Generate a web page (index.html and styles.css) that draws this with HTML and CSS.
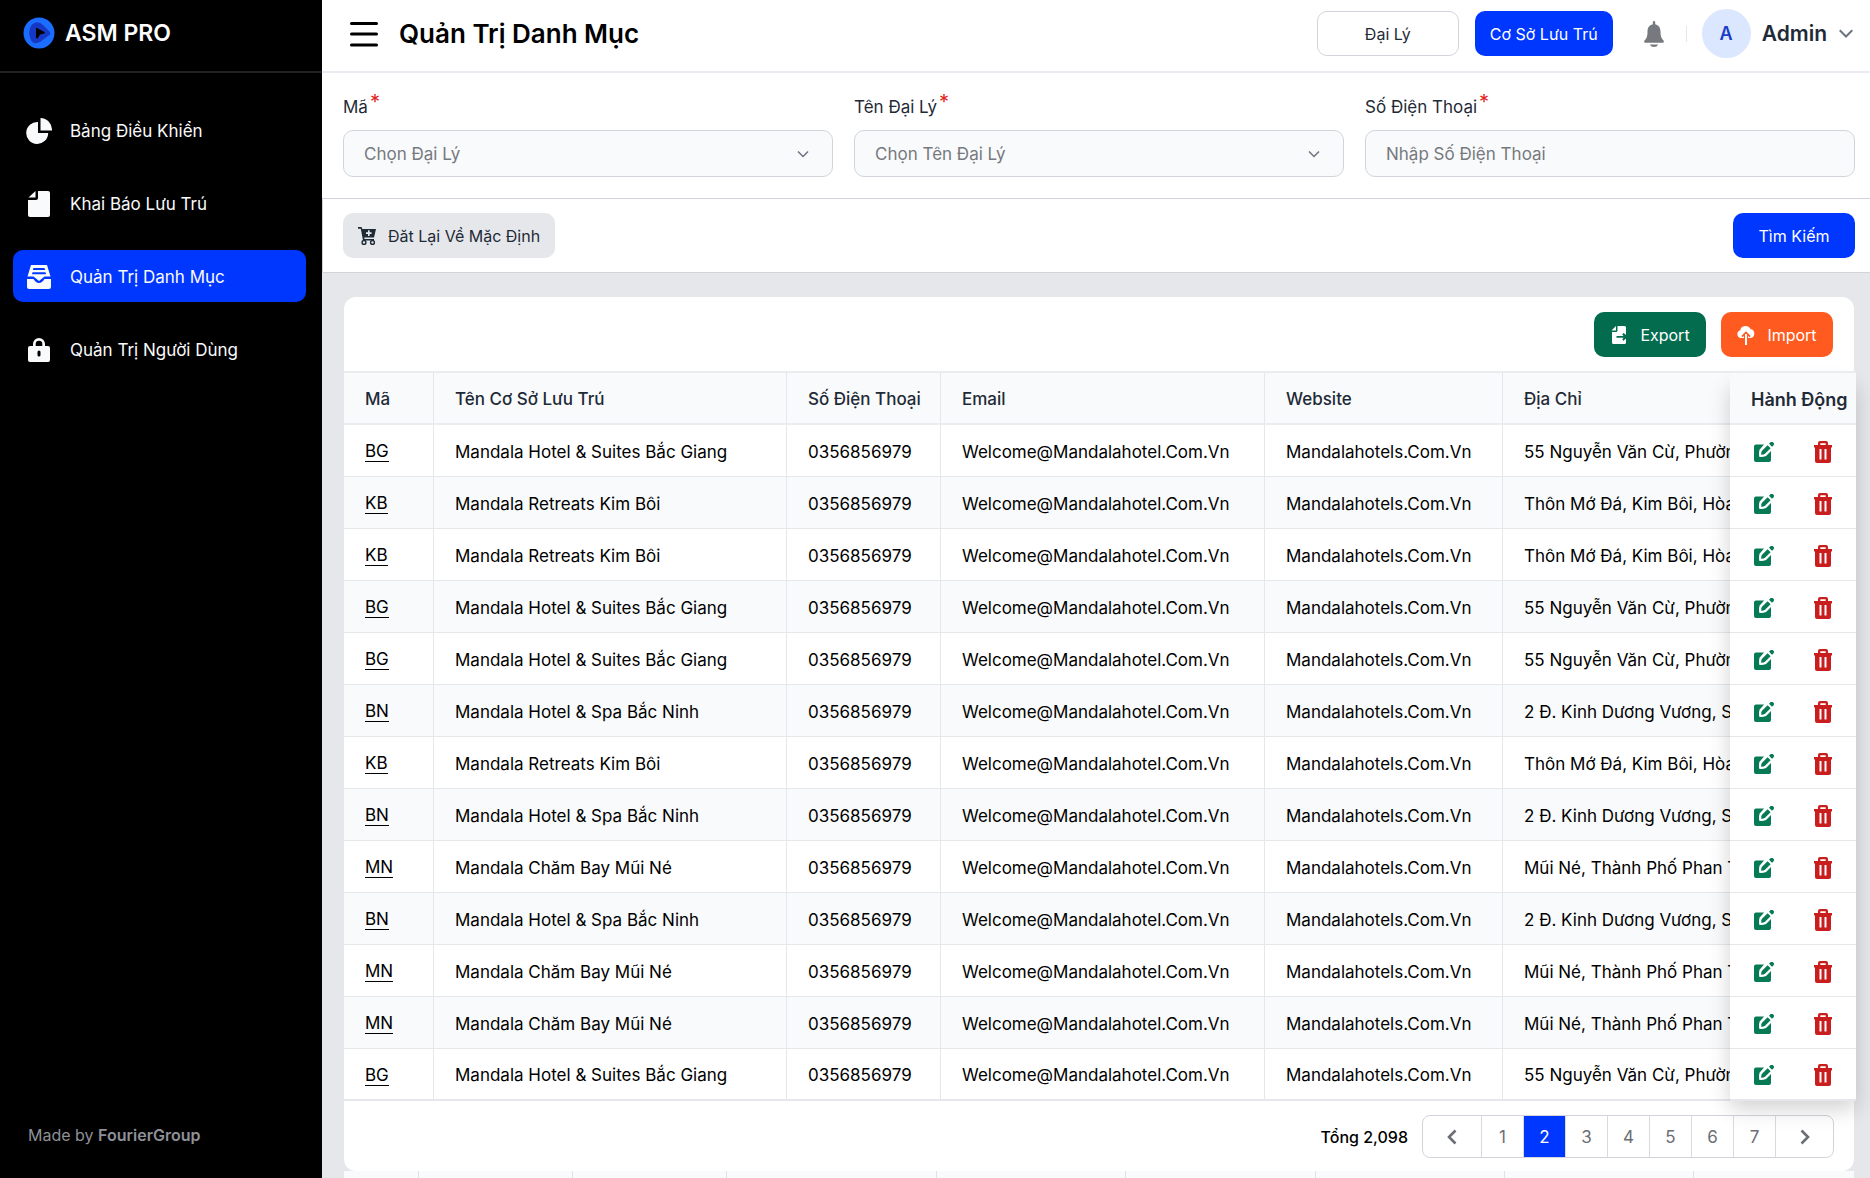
FILE: index.html
```html
<!DOCTYPE html>
<html lang="vi">
<head>
<meta charset="utf-8">
<meta name="viewport" content="width=device-width, initial-scale=1">
<title>Quản Trị Danh Mục</title>
<link rel="stylesheet" href="styles.css">
</head>
<body>
<svg class="sprite" aria-hidden="true">
  <symbol id="i-edit" viewBox="0 0 20 20"><path d="M2 2.500h8L5.500 7.800Q4.500 11 5.200 14.800 9 15.200 12 14l5-5V18a2 2 0 0 1-2 2H2a2 2 0 0 1-2-2V4.500a2 2 0 0 1 2-2z"/><path d="M7.200 12.800Q7 10 8 8.800L13.600 3.200l3 3L11 11.800Q9.500 13 7.200 12.800z"/><path d="M15 1.800L16.200.6a1.900 1.900 0 0 1 3.200 2.800L18 4.800z"/></symbol>
  <symbol id="i-trash" viewBox="0 0 18 22"><path fill-rule="evenodd" d="M6 0h6a2 2 0 0 1 2 2v2h4v2.500h-1V20a2 2 0 0 1-2 2H3a2 2 0 0 1-2-2V6.500H0V4h4V2a2 2 0 0 1 2-2zM6.300 2.200V4h5.400V2.200zM5.500 8v10.500h2V8zM10.500 8v10.500h2V8z"/></symbol>
  <symbol id="i-chevron" viewBox="0 0 12 8"><path d="M1 1.500l5 5 5-5" fill="none" stroke="currentColor" stroke-width="1.500"/></symbol>
</svg>
<div class="app">
  <aside class="sidebar">
    <div class="brand">
      <svg width="32" height="32" viewBox="0 0 32 32" aria-hidden="true"><circle cx="16" cy="16" r="15.500" fill="#1a6dff"/><path d="M9 7.500Q15 3 20 8l6 6q3 3-1 5l-8 6q-7 3-9-2Q4 14 9 7.500z" fill="#1638c4"/><path d="M13 10.500l8.500 4.500q1 1-.5 1.500l-4 1-2.500 4q-1.500 0-1.500-1.500z" fill="#000"/></svg>
      <span>ASM PRO</span>
    </div>
    <nav class="nav">
      <a href="#"><svg viewBox="0 0 26 26" aria-hidden="true"><path d="M12 4v11h10.200A11 11 0 1 1 12 4z"/><path d="M14.500 0A12 12 0 0 1 26 12.500H14.500z"/></svg>Bảng Điều Khiển</a>
      <a href="#"><svg viewBox="0 0 26 26" aria-hidden="true"><path d="M12 0h10a2 2 0 0 1 2 2v22a2 2 0 0 1-2 2H4a2 2 0 0 1-2-2V9h8a2 2 0 0 0 2-2z"/><path d="M9.500 0v6.500H2.500z"/></svg>Khai Báo Lưu Trú</a>
      <a href="#" class="active" aria-current="page"><svg viewBox="0 0 26 26" aria-hidden="true"><path fill-rule="evenodd" d="M5 1h16l3.500 11.500h-6L13 17l-5.500-4.500h-6zM7.500 4l-.7 2h12.400l-.7-2zM6.500 8.300l-.5 2h14l-.5-2z"/><path d="M1 15h6.500q2.500 4 5.500 4t5.500-4H25v8a2 2 0 0 1-2 2H3a2 2 0 0 1-2-2z"/></svg>Quản Trị Danh Mục</a>
      <a href="#"><svg viewBox="0 0 26 26" aria-hidden="true"><path fill-rule="evenodd" d="M7 9V7a6 6 0 0 1 12 0v2h3a2 2 0 0 1 2 2v12a2 2 0 0 1-2 2H4a2 2 0 0 1-2-2V11a2 2 0 0 1 2-2zm2.700 0h6.600V7a3.300 3.300 0 0 0-6.600 0zM13 13.500a1.500 1.500 0 0 0-1.500 1.500v3a1.500 1.500 0 0 0 3 0v-3a1.500 1.500 0 0 0-1.500-1.500z"/></svg>Quản Trị Người Dùng</a>
    </nav>
    <p class="made">Made by <strong>FourierGroup</strong></p>
  </aside>

  <main class="main">
    <header class="topbar">
      <button class="icon-btn" type="button" aria-label="Menu"><svg width="30" height="28" viewBox="0 0 30 28"><path d="M2.500 3.500h25M2.500 14h25M2.500 25h25" stroke="#000" stroke-width="3" stroke-linecap="round"/></svg></button>
      <h1>Quản Trị Danh Mục</h1>
      <button class="btn outline" type="button">Đại Lý</button>
      <button class="btn primary" type="button">Cơ Sở Lưu Trú</button>
      <button class="icon-btn bell" type="button" aria-label="Notifications"><svg width="20" height="26" viewBox="0 0 20 26"><path d="M8.800 1.200a1.200 1.200 0 0 1 2.400 0v2c3.600.8 5.300 3.600 5.300 7.300 0 5 1 7 3 9 .8.900.3 2.200-.9 2.200H1.400c-1.200 0-1.700-1.300-.9-2.200 2-2 3-4 3-9 0-3.700 1.700-6.500 5.300-7.300z" fill="#76797e"/><path d="M5.800 23.500h8.400Q13 26 10 26t-4.200-2.500z" fill="#76797e"/></svg></button>
      <span class="rule"></span>
      <button class="user" type="button"><span class="avatar">A</span><span>Admin</span><svg width="16" height="10" viewBox="0 0 12 8"><path d="M1 1l5 5 5-5" fill="none" stroke="#6b7280" stroke-width="1.600"/></svg></button>
    </header>

    <form class="filters">
      <div class="field">
        <label for="code">Mã<sup>*</sup></label>
        <div class="control"><select id="code"><option>Chọn Đại Lý</option></select><svg class="chev" aria-hidden="true"><use href="#i-chevron"/></svg></div>
      </div>
      <div class="field">
        <label for="agent">Tên Đại Lý<sup>*</sup></label>
        <div class="control"><select id="agent"><option>Chọn Tên Đại Lý</option></select><svg class="chev" aria-hidden="true"><use href="#i-chevron"/></svg></div>
      </div>
      <div class="field">
        <label for="phone">Số Điện Thoại<sup>*</sup></label>
        <div class="control"><input id="phone" type="tel" placeholder="Nhập Số Điện Thoại"></div>
      </div>
    </form>

    <div class="actions-bar">
      <button class="btn grey" type="button"><svg width="18" height="18" viewBox="0 0 18 18" aria-hidden="true"><path fill-rule="evenodd" d="M0 0h3.500l.8 2H18l-2 8.500H6.200l.3 1.500H16v1.500H5L2.800 1.700H0zM10 3.300v2H8v1.600h2v2h1.600v-2h2V5.300h-2v-2z"/><circle cx="6" cy="15.400" r="1.900" fill="none" stroke="#1f2a37" stroke-width="1.400"/><circle cx="14.500" cy="15.400" r="1.900" fill="none" stroke="#1f2a37" stroke-width="1.400"/></svg>Đăt Lại Về Mặc Định</button>
      <button class="btn primary search" type="button">Tìm Kiếm</button>
    </div>

    <section class="content">
      <div class="card">
        <div class="card-tools">
          <button class="btn green" type="button"><svg width="18" height="20" viewBox="0 0 18 20" aria-hidden="true"><path d="M7.500 1h7a1.500 1.500 0 0 1 1.500 1.500V10l-2.500-2-1.300 1.300L13.500 11H6.500v1.800h7l-1.300 1.700 1.300 1.300L16 13.500V17.500a1.500 1.500 0 0 1-1.500 1.500h-11A1.500 1.500 0 0 1 2 17.500V7h4a1.500 1.500 0 0 0 1.500-1.500z"/><path d="M6 1v4.500H1.500z"/></svg>Export</button>
          <button class="btn orange" type="button"><svg width="18" height="20" viewBox="0 0 18 20" aria-hidden="true"><path d="M4 13a4 4 0 0 1-.8-7.800A5.500 5.500 0 0 1 13.500 4 4.600 4.600 0 0 1 13.800 13H11v-2l1.400 1.200 1.300-1.300L9 6.200l-4.700 4.700 1.300 1.300L7 11v2z"/><path d="M8 9h2v11H8z"/></svg>Import</button>
        </div>
        <div class="table-wrap">
          <table>
            <colgroup><col class="c-code"><col class="c-name"><col class="c-phone"><col class="c-mail"><col class="c-web"><col><col class="c-act"></colgroup>
            <thead><tr><th>Mã</th><th>Tên Cơ Sở Lưu Trú</th><th>Số Điện Thoại</th><th>Email</th><th>Website</th><th>Địa Chỉ</th><th>Hành Động</th></tr></thead>
            <tbody>
              <tr><td><a href="#">BG</a></td><td>Mandala Hotel &amp; Suites Bắc Giang</td><td>0356856979</td><td>Welcome@Mandalahotel.Com.Vn</td><td>Mandalahotels.Com.Vn</td><td>55 Nguyễn Văn Cừ, Phường</td><td><button type="button" class="edit" aria-label="Edit"><svg><use href="#i-edit"/></svg></button><button type="button" class="del" aria-label="Delete"><svg><use href="#i-trash"/></svg></button></td></tr>
              <tr><td><a href="#">KB</a></td><td>Mandala Retreats Kim Bôi</td><td>0356856979</td><td>Welcome@Mandalahotel.Com.Vn</td><td>Mandalahotels.Com.Vn</td><td>Thôn Mớ Đá, Kim Bôi, Hòa Bình</td><td><button type="button" class="edit" aria-label="Edit"><svg><use href="#i-edit"/></svg></button><button type="button" class="del" aria-label="Delete"><svg><use href="#i-trash"/></svg></button></td></tr>
              <tr><td><a href="#">KB</a></td><td>Mandala Retreats Kim Bôi</td><td>0356856979</td><td>Welcome@Mandalahotel.Com.Vn</td><td>Mandalahotels.Com.Vn</td><td>Thôn Mớ Đá, Kim Bôi, Hòa Bình</td><td><button type="button" class="edit" aria-label="Edit"><svg><use href="#i-edit"/></svg></button><button type="button" class="del" aria-label="Delete"><svg><use href="#i-trash"/></svg></button></td></tr>
              <tr><td><a href="#">BG</a></td><td>Mandala Hotel &amp; Suites Bắc Giang</td><td>0356856979</td><td>Welcome@Mandalahotel.Com.Vn</td><td>Mandalahotels.Com.Vn</td><td>55 Nguyễn Văn Cừ, Phường</td><td><button type="button" class="edit" aria-label="Edit"><svg><use href="#i-edit"/></svg></button><button type="button" class="del" aria-label="Delete"><svg><use href="#i-trash"/></svg></button></td></tr>
              <tr><td><a href="#">BG</a></td><td>Mandala Hotel &amp; Suites Bắc Giang</td><td>0356856979</td><td>Welcome@Mandalahotel.Com.Vn</td><td>Mandalahotels.Com.Vn</td><td>55 Nguyễn Văn Cừ, Phường</td><td><button type="button" class="edit" aria-label="Edit"><svg><use href="#i-edit"/></svg></button><button type="button" class="del" aria-label="Delete"><svg><use href="#i-trash"/></svg></button></td></tr>
              <tr><td><a href="#">BN</a></td><td>Mandala Hotel &amp; Spa Bắc Ninh</td><td>0356856979</td><td>Welcome@Mandalahotel.Com.Vn</td><td>Mandalahotels.Com.Vn</td><td>2 Đ. Kinh Dương Vương, Suối Hoa</td><td><button type="button" class="edit" aria-label="Edit"><svg><use href="#i-edit"/></svg></button><button type="button" class="del" aria-label="Delete"><svg><use href="#i-trash"/></svg></button></td></tr>
              <tr><td><a href="#">KB</a></td><td>Mandala Retreats Kim Bôi</td><td>0356856979</td><td>Welcome@Mandalahotel.Com.Vn</td><td>Mandalahotels.Com.Vn</td><td>Thôn Mớ Đá, Kim Bôi, Hòa Bình</td><td><button type="button" class="edit" aria-label="Edit"><svg><use href="#i-edit"/></svg></button><button type="button" class="del" aria-label="Delete"><svg><use href="#i-trash"/></svg></button></td></tr>
              <tr><td><a href="#">BN</a></td><td>Mandala Hotel &amp; Spa Bắc Ninh</td><td>0356856979</td><td>Welcome@Mandalahotel.Com.Vn</td><td>Mandalahotels.Com.Vn</td><td>2 Đ. Kinh Dương Vương, Suối Hoa</td><td><button type="button" class="edit" aria-label="Edit"><svg><use href="#i-edit"/></svg></button><button type="button" class="del" aria-label="Delete"><svg><use href="#i-trash"/></svg></button></td></tr>
              <tr><td><a href="#">MN</a></td><td>Mandala Chăm Bay Mũi Né</td><td>0356856979</td><td>Welcome@Mandalahotel.Com.Vn</td><td>Mandalahotels.Com.Vn</td><td>Mũi Né, Thành Phố Phan Thiết</td><td><button type="button" class="edit" aria-label="Edit"><svg><use href="#i-edit"/></svg></button><button type="button" class="del" aria-label="Delete"><svg><use href="#i-trash"/></svg></button></td></tr>
              <tr><td><a href="#">BN</a></td><td>Mandala Hotel &amp; Spa Bắc Ninh</td><td>0356856979</td><td>Welcome@Mandalahotel.Com.Vn</td><td>Mandalahotels.Com.Vn</td><td>2 Đ. Kinh Dương Vương, Suối Hoa</td><td><button type="button" class="edit" aria-label="Edit"><svg><use href="#i-edit"/></svg></button><button type="button" class="del" aria-label="Delete"><svg><use href="#i-trash"/></svg></button></td></tr>
              <tr><td><a href="#">MN</a></td><td>Mandala Chăm Bay Mũi Né</td><td>0356856979</td><td>Welcome@Mandalahotel.Com.Vn</td><td>Mandalahotels.Com.Vn</td><td>Mũi Né, Thành Phố Phan Thiết</td><td><button type="button" class="edit" aria-label="Edit"><svg><use href="#i-edit"/></svg></button><button type="button" class="del" aria-label="Delete"><svg><use href="#i-trash"/></svg></button></td></tr>
              <tr><td><a href="#">MN</a></td><td>Mandala Chăm Bay Mũi Né</td><td>0356856979</td><td>Welcome@Mandalahotel.Com.Vn</td><td>Mandalahotels.Com.Vn</td><td>Mũi Né, Thành Phố Phan Thiết</td><td><button type="button" class="edit" aria-label="Edit"><svg><use href="#i-edit"/></svg></button><button type="button" class="del" aria-label="Delete"><svg><use href="#i-trash"/></svg></button></td></tr>
              <tr><td><a href="#">BG</a></td><td>Mandala Hotel &amp; Suites Bắc Giang</td><td>0356856979</td><td>Welcome@Mandalahotel.Com.Vn</td><td>Mandalahotels.Com.Vn</td><td>55 Nguyễn Văn Cừ, Phường</td><td><button type="button" class="edit" aria-label="Edit"><svg><use href="#i-edit"/></svg></button><button type="button" class="del" aria-label="Delete"><svg><use href="#i-trash"/></svg></button></td></tr>
            </tbody>
          </table>
        </div>
        <div class="card-foot">
          <span class="total">Tổng 2,098</span>
          <nav class="pager" aria-label="Pages">
            <button type="button" class="arrow" aria-label="Previous"><svg width="10" height="16" viewBox="0 0 10 16"><path d="M8.500 1.500L2 8l6.500 6.500" fill="none" stroke="#6b6e74" stroke-width="2.600"/></svg></button>
            <button type="button">1</button>
            <button type="button" class="on" aria-current="page">2</button>
            <button type="button">3</button>
            <button type="button">4</button>
            <button type="button">5</button>
            <button type="button">6</button>
            <button type="button">7</button>
            <button type="button" class="arrow" aria-label="Next"><svg width="10" height="16" viewBox="0 0 10 16"><path d="M1.500 1.500L8 8l-6.500 6.500" fill="none" stroke="#6b6e74" stroke-width="2.600"/></svg></button>
          </nav>
        </div>
      </div>
      <div class="strip"><i class="s-first"></i><i class="s-small"></i><i class="s-small"></i><i class="s-wide"></i><i></i><i></i><i></i><i></i><i class="s-last"></i></div>
    </section>
  </main>
</div>
</body>
</html>
```
FILE: styles.css
```css
* { box-sizing: border-box; }
body { margin: 0; font-family: Inter, "Noto Sans", sans-serif; font-size: 17px; color: #1f2a37; }
button, input, select { font: inherit; color: inherit; margin: 0; }
button { border: 0; background: none; padding: 0; cursor: pointer; }
a { color: inherit; text-decoration: none; }
svg { display: block; flex: none; }
.sprite { position: absolute; width: 0; height: 0; }

.app { display: flex; height: 100vh; overflow: hidden; }

/* Sidebar */
.sidebar { flex: none; width: 322px; background: #000; color: #f9fafb; display: flex; flex-direction: column; }
.brand { height: 73px; padding: 0 23px 5px; display: flex; align-items: center; gap: 10px; border-bottom: 2px solid #222226; font-size: 23px; font-weight: 600; color: #fff; }
.nav { display: flex; flex-direction: column; gap: 21px; padding: 31px 16px 0 13px; }
.nav a { height: 52px; padding: 1px 13px 0; display: flex; align-items: center; gap: 18px; border-radius: 10px; }
.nav svg { width: 26px; height: 26px; fill: #f9fafb; }
.nav .active { background: #0037ff; }
.made { margin: auto 0 33px 28px; font-size: 16px; line-height: 20px; color: #8e9197; }
.made strong { font-weight: 600; }

/* Top bar */
.main { flex: 1; min-width: 0; display: flex; flex-direction: column; background: #fff; }
.topbar { flex: none; height: 73px; padding: 0 16px 4px 27px; display: flex; align-items: center; border-bottom: 2px solid #ebecf2; }
h1 { margin: 0 auto 0 20px; font-size: 26px; font-weight: 600; color: #000; }
.btn { height: 45px; display: flex; align-items: center; justify-content: center; padding: 0 15px; border-radius: 10px; font-size: 16px; white-space: nowrap; }
.primary { background: #0037ff; color: #fff; }
.outline { width: 142px; border: 1px solid #d1d5db; margin-right: 16px; color: #1f2a37; }
.bell { margin-left: 31px; }
.rule { width: 1px; height: 16px; background: #e5e7eb; margin: 0 15px 0 22px; }
.user { display: flex; align-items: center; font-size: 21px; font-weight: 600; }
.avatar { width: 49px; height: 49px; margin-right: 11px; border-radius: 50%; background: #dbe6ff; color: #1a3ac8; font-size: 18px; font-weight: 600; display: flex; align-items: center; justify-content: center; }
.user svg { margin-left: 11px; }

/* Filters */
.filters { flex: none; display: grid; grid-template-columns: repeat(3, 1fr); gap: 21px; padding: 23px 15px 21px 21px; }
.field { display: flex; flex-direction: column; gap: 12px; }
label { line-height: 22px; display: flex; align-items: center; }
label sup { font-size: 20px; line-height: 12px; color: #e02424; align-self: flex-start; margin-left: 2px; }
.control { position: relative; }
.control select, .control input { width: 100%; height: 47px; padding: 0 20px; border: 1px solid #d1d5db; border-radius: 10px; background: #f9fafb; color: #76797e; appearance: none; }
.control input::placeholder { color: #76797e; opacity: 1; }
.chev { position: absolute; right: 24px; top: 20px; width: 12px; height: 8px; color: #6b7280; pointer-events: none; }
.actions-bar { flex: none; display: flex; justify-content: space-between; padding: 14px 15px 14px 20px; border: solid #d1d5db; border-width: 1px 0 1px 1px; }
.grey { background: #e5e7eb; gap: 12px; }
.grey svg { fill: #1f2a37; }
.search { width: 122px; }

/* Card */
.content { flex: 1; min-height: 0; overflow: hidden; padding: 24px 16px 0 22px; background: #e5e7eb; }
.card { background: #fff; border-radius: 12px; }
.card-tools { height: 74px; display: flex; align-items: center; justify-content: flex-end; gap: 15px; padding: 1px 21px 0; }
.card-tools .btn { width: 112px; gap: 12px; color: #fff; }
.card-tools svg { fill: #fff; }
.green { background: #046c4e; }
.orange { background: #ff5a1f; }

.table-wrap { position: relative; margin-right: -2px; }
.table-wrap::after { content: ""; position: absolute; z-index: 1; top: 8px; right: 0; bottom: 0; width: 126px; background: #fff; box-shadow: 0 8px 20px rgba(0, 0, 0, .18); }
table { width: 100%; table-layout: fixed; border-collapse: separate; border-spacing: 0; }
.c-code { width: 90px; }
.c-name { width: 353px; }
.c-phone { width: 154px; }
.c-mail { width: 324px; }
.c-web { width: 238px; }
.c-act { width: 126px; }
th, td { height: 52px; padding: 2px 0 0 21px; text-align: left; white-space: nowrap; overflow: hidden; border-bottom: 1px solid #e5e7eb; border-right: 1px solid #e5e7eb; }
th { height: 54px; font-weight: 500; background: #f9fafb; border-top: 2px solid #ebecf0; border-bottom: 2px solid #ebecf0; }
td { color: #000; background: #fff; }
tr:nth-child(even) td { background: #f9fafb; }
tbody tr:last-child td { border-bottom: 2px solid #e5e7eb; }
th:nth-last-child(2), td:nth-last-child(2) { border-right: 0; }
th:last-child, tbody tr td:last-child { position: relative; z-index: 2; border-right: 0; }
th:last-child { font-size: 18px; font-weight: 600; }
tbody tr td:last-child { background: #fff; padding-left: 24px; }
td a { display: inline-block; line-height: 20px; border-bottom: 1px solid #000; }
td button { display: inline-block; vertical-align: middle; }
.edit svg { width: 20px; height: 20px; fill: #057a55; }
.del { margin-left: 40px; }
.del svg { width: 18px; height: 22px; fill: #c81e1e; }

/* Pagination */
.card-foot { display: flex; align-items: center; justify-content: flex-end; gap: 14px; height: 70px; padding: 1px 20px 0; }
.total { font-size: 16px; font-weight: 500; color: #000; }
.pager { display: flex; height: 43px; border: 1px solid #d1d5db; border-radius: 8px; overflow: hidden; }
.pager button { width: 42px; display: flex; align-items: center; justify-content: center; color: #6b6e74; border-left: 1px solid #d9dbe0; }
.pager .arrow { width: 58px; }
.pager .arrow:first-child { border-left: 0; }
.pager .on { background: #0037ff; color: #fff; }

/* Column header of the next table, partly below the fold */
.strip { display: flex; height: 52px; background: #f9fafb; }
.strip i { flex: 1; border-right: 1px solid #dfe1e6; }
.strip .s-first { flex: none; width: 75px; }
.strip .s-small { flex: none; width: 154px; }
.strip .s-wide { flex: none; width: 210px; }
.strip .s-last { flex: none; width: 160px; border: 0; }
```
